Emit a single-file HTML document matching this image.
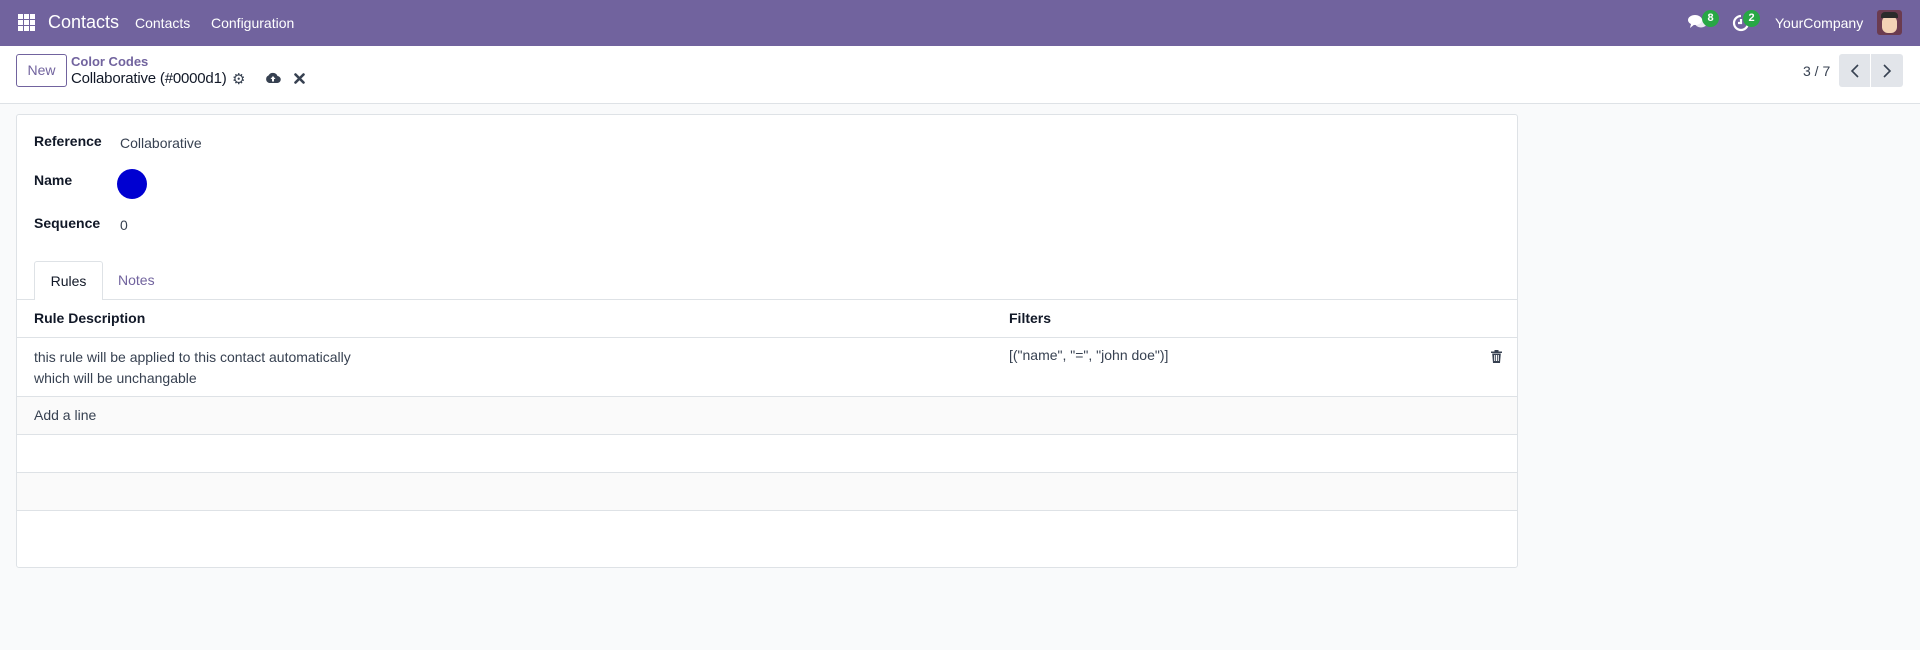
<!DOCTYPE html>
<html><head><meta charset="utf-8"><style>
*{box-sizing:border-box;margin:0;padding:0}
body{width:1920px;height:650px;background:#f9fafb;font-family:"Liberation Sans","DejaVu Sans",sans-serif;color:#374151;font-size:14px;position:relative;overflow:hidden}
.abs{position:absolute}
.nav{left:0;top:0;width:1920px;height:46px;background:#71639e;color:#fff}
.cp{left:0;top:46px;width:1920px;height:58px;background:#fff;border-bottom:1px solid #dee2e6}
.card{left:16px;top:114px;width:1502px;height:454px;background:#fff;border:1px solid #dee2e6;border-radius:3px;overflow:hidden}
.lbl{font-weight:bold;color:#111827}
.hr{position:absolute;left:0;width:100%;border-top:1px solid #dee2e6}
.badge{background:#28a745;color:#fff;font-size:11px;font-weight:bold;border-radius:9px;height:17px;min-width:17px;text-align:center;line-height:17px}
</style></head><body>
<div class="abs nav">
  <svg class="abs" style="left:18px;top:14px" width="17" height="17" viewBox="0 0 17 17" fill="#fff"><rect x="0" y="0" width="5" height="5"/><rect x="6" y="0" width="5" height="5"/><rect x="12" y="0" width="5" height="5"/><rect x="0" y="6" width="5" height="5"/><rect x="6" y="6" width="5" height="5"/><rect x="12" y="6" width="5" height="5"/><rect x="0" y="12" width="5" height="5"/><rect x="6" y="12" width="5" height="5"/><rect x="12" y="12" width="5" height="5"/></svg>
  <div class="abs" style="left:48px;top:12px;font-size:18px">Contacts</div>
  <div class="abs" style="left:135px;top:15px;font-size:14px">Contacts</div>
  <div class="abs" style="left:211px;top:15px;font-size:14px">Configuration</div>
  <svg class="abs" style="left:1688px;top:14px" width="20" height="16" viewBox="0 0 20 16" fill="#fff"><ellipse cx="7" cy="6" rx="7" ry="5"/><path d="M3 10 L2 14 L7 10Z"/><ellipse cx="13" cy="9" rx="6" ry="4.5" opacity=".85"/></svg>
  <div class="abs badge" style="left:1702px;top:10px">8</div>
  <svg class="abs" style="left:1732px;top:14px" width="18" height="18" viewBox="0 0 18 18" fill="none" stroke="#fff" stroke-width="2.2"><path d="M9 2 A7 7 0 1 0 16 9"/><path d="M9 5 V9 H6"/></svg>
  <div class="abs badge" style="left:1743px;top:10px">2</div>
  <div class="abs" style="left:1775px;top:15px;font-size:14px">YourCompany</div>
  <div class="abs" style="left:1877px;top:10px;width:25px;height:25px;border-radius:3px;background:#6b3b4f;overflow:hidden"><div style="position:absolute;left:5px;top:6px;width:15px;height:17px;background:#f3d2b5;border-radius:6px"></div><div style="position:absolute;left:4px;top:2px;width:17px;height:6px;background:#2b2b2b;border-radius:4px 4px 0 0"></div></div>
</div>
<div class="abs cp">
  <div class="abs" style="left:16px;top:8px;width:51px;height:33px;border:1px solid #71639e;border-radius:3px;color:#71639e;font-size:14px;line-height:31px;text-align:center">New</div>
  <div class="abs" style="left:71px;top:8px;font-size:13px;font-weight:bold;color:#71639e">Color Codes</div>
  <div class="abs" style="left:71px;top:24px;font-size:15px;color:#111827;letter-spacing:-0.2px">Collaborative (#0000d1)</div>
  <div class="abs" style="left:232px;top:24px;font-size:15px;color:#374151;font-weight:bold">⚙</div>
  <svg class="abs" style="left:265px;top:26px" width="16" height="12" viewBox="0 0 16 12"><path d="M4 11 A4 4 0 0 1 3.5 3.5 A5 5 0 0 1 12.5 4 A3.5 3.5 0 0 1 12 11Z" fill="#374151"/><path d="M8 4 L5.5 7 H7 V9.5 H9 V7 H10.5Z" fill="#fff"/></svg>
  <svg class="abs" style="left:294px;top:27px" width="11" height="11" viewBox="0 0 11 11" stroke="#374151" stroke-width="2.6" stroke-linecap="round"><path d="M1.5 1.5 L9.5 9.5 M9.5 1.5 L1.5 9.5"/></svg>
  <div class="abs" style="left:1803px;top:17px;font-size:14px">3 / 7</div>
  <div class="abs" style="left:1839px;top:8px;width:64px;height:33px;background:#e2e5ea;border-radius:3px"></div>
  <div class="abs" style="left:1870px;top:8px;width:1px;height:33px;background:#fff"></div>
  <svg class="abs" style="left:1849px;top:17px" width="12" height="16" viewBox="0 0 12 16" fill="none" stroke="#374151" stroke-width="1.6"><path d="M9 2 L3 8 L9 14"/></svg>
  <svg class="abs" style="left:1881px;top:17px" width="12" height="16" viewBox="0 0 12 16" fill="none" stroke="#374151" stroke-width="1.6"><path d="M3 2 L9 8 L3 14"/></svg>
</div>
<div class="abs card">
  <div class="abs lbl" style="left:17px;top:18px">Reference</div>
  <div class="abs" style="left:103px;top:20px">Collaborative</div>
  <div class="abs lbl" style="left:17px;top:57px">Name</div>
  <div class="abs" style="left:100px;top:54px;width:30px;height:30px;border-radius:50%;background:#0000d1"></div>
  <div class="abs lbl" style="left:17px;top:100px">Sequence</div>
  <div class="abs" style="left:103px;top:102px">0</div>
  <div class="abs" style="left:17px;top:146px;width:69px;height:39px;border:1px solid #dee2e6;border-bottom:none;border-radius:3px 3px 0 0;background:#fff;z-index:2;text-align:center;line-height:38px;color:#111827">Rules</div>
  <div class="abs" style="left:101px;top:157px;color:#71639e">Notes</div>
  <div class="hr" style="top:184px"></div>
  <div class="abs lbl" style="left:17px;top:195px">Rule Description</div>
  <div class="abs lbl" style="left:992px;top:195px">Filters</div>
  <div class="hr" style="top:222px"></div>
  <div class="abs" style="left:17px;top:232px;line-height:21px">this rule will be applied to this contact automatically<br>which will be unchangable</div>
  <div class="abs" style="left:992px;top:232px">[("name", "=", "john doe")]</div>
  <svg class="abs" style="left:1474px;top:235px" width="11" height="13" viewBox="0 0 11 13" fill="#374151"><rect x="0" y="1.5" width="11" height="1.5"/><rect x="3.5" y="0" width="4" height="1.5"/><path d="M1.2 3.5 H9.8 L9 13 H2Z"/><rect x="3.2" y="5" width="1" height="6" fill="#fff"/><rect x="5" y="5" width="1" height="6" fill="#fff"/><rect x="6.8" y="5" width="1" height="6" fill="#fff"/></svg>
  <div class="hr" style="top:281px"></div>
  <div class="abs" style="left:0;top:282px;width:100%;height:37px;background:#fafafa"></div>
  <div class="abs" style="left:17px;top:292px">Add a line</div>
  <div class="hr" style="top:319px"></div>
  <div class="hr" style="top:357px"></div>
  <div class="abs" style="left:0;top:358px;width:100%;height:37px;background:#fafafa"></div>
  <div class="hr" style="top:395px"></div>
</div>
</body></html>
